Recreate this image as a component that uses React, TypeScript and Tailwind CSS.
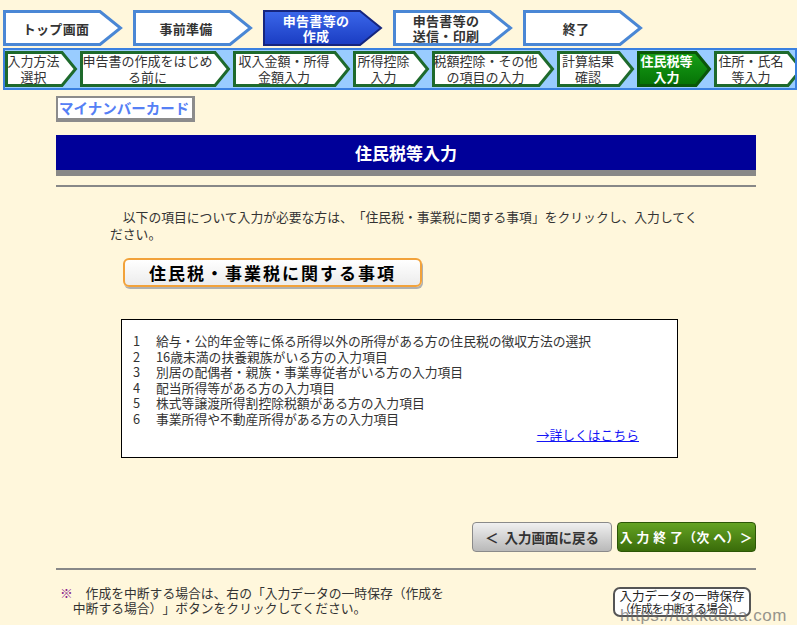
import React from "react";

type ShapeProps = {
  w: number;
  h: number;
  tip: number;
  stroke: string;
  sw: number;
  fill: string;
  grad?: { id: string; from: string; to: string };
};

function ChevronShape({ w, h, tip, stroke, sw, fill, grad }: ShapeProps) {
  const s = sw / 2;
  const pts = `${s},${s} ${w - tip},${s} ${w - s - 1},${h / 2} ${w - tip},${h - s} ${s},${h - s}`;
  return (
    <svg
      className="absolute left-0 top-0"
      width={w}
      height={h}
      viewBox={`0 0 ${w} ${h}`}
    >
      {grad && (
        <defs>
          <linearGradient id={grad.id} x1="0" y1="0" x2="0" y2="1">
            <stop offset="0" stopColor={grad.from} />
            <stop offset="1" stopColor={grad.to} />
          </linearGradient>
        </defs>
      )}
      <polygon
        points={pts}
        fill={grad ? `url(#${grad.id})` : fill}
        stroke={stroke}
        strokeWidth={sw}
        strokeLinejoin="miter"
        strokeMiterlimit={3}
      />
    </svg>
  );
}

const topSteps: { lines: string[]; active?: boolean }[] = [
  { lines: ["トップ画面"] },
  { lines: ["事前準備"] },
  { lines: ["申告書等の", "作成"], active: true },
  { lines: ["申告書等の", "送信・印刷"] },
  { lines: ["終了"] },
];

const subSteps: { lines: string[]; w: number; cls: string; active?: boolean }[] = [
  { lines: ["入力方法", "選択"], w: 73, cls: "w-[73px]" },
  { lines: ["申告書の作成をはじめ", "る前に"], w: 151, cls: "w-[151px]" },
  { lines: ["収入金額・所得", "金額入力"], w: 118, cls: "w-[118px]" },
  { lines: ["所得控除", "入力"], w: 77, cls: "w-[77px]" },
  { lines: ["税額控除・その他", "の項目の入力"], w: 123, cls: "w-[123px]" },
  { lines: ["計算結果", "確認"], w: 78, cls: "w-[78px]" },
  { lines: ["住民税等", "入力"], w: 75, cls: "w-[75px]", active: true },
  { lines: ["住所・氏名", "等入力"], w: 90, cls: "w-[90px]" },
];

const items = [
  "給与・公的年金等に係る所得以外の所得がある方の住民税の徴収方法の選択",
  "16歳未満の扶養親族がいる方の入力項目",
  "別居の配偶者・親族・事業専従者がいる方の入力項目",
  "配当所得等がある方の入力項目",
  "株式等譲渡所得割控除税額がある方の入力項目",
  "事業所得や不動産所得がある方の入力項目",
];

export default function App() {
  return (
    <div className="relative min-h-screen w-full overflow-hidden bg-[#fff7dc] font-['Noto_Sans_CJK_JP',sans-serif] text-[#333] [text-spacing-trim:space-all]">
      {/* top steps */}
      <div className="flex gap-[10px] pl-[3px] pt-[10px]">
        {topSteps.map((s, i) => (
          <div key={i} className="relative h-[36px] w-[120px] shrink-0">
            <ChevronShape
              w={120}
              h={36}
              tip={23}
              sw={s.active ? 2 : 3}
              stroke={s.active ? "#16267e" : "#4a87d5"}
              fill="#ffffff"
              grad={s.active ? { id: "topActive", from: "#3b67ea", to: "#1a3cc2" } : undefined}
            />
            <div
              className={`relative flex h-full flex-col items-center justify-center pr-[14px] text-[13px] font-bold leading-[15px] tracking-[0.3px] ${
                s.active ? "text-white" : "text-[#333]"
              }`}
            >
              {s.lines.map((l, j) => (
                <span key={j}>{l}</span>
              ))}
            </div>
          </div>
        ))}
      </div>

      {/* sub steps band */}
      <div className="ml-[3px] mt-[2px] flex h-[42px] w-[794px] items-center gap-[2px] overflow-hidden border-2 border-[#3a80e0] bg-[#99ccff]">
        {subSteps.map((s, i) => (
          <div key={i} className={`relative h-[36px] shrink-0 ${s.cls}`}>
            <ChevronShape
              w={s.w}
              h={36}
              tip={16}
              sw={3}
              stroke={s.active ? "#0a560a" : "#1e6a2c"}
              fill="#ffffff"
              grad={s.active ? { id: "subActive", from: "#17a017", to: "#067206" } : undefined}
            />
            <div
              className={`relative flex h-full flex-col items-center justify-center pr-[16px] text-[13px] leading-[16px] ${
                s.active ? "font-bold text-white" : "text-[#333]"
              }`}
            >
              {s.lines.map((l, j) => (
                <span key={j} className="whitespace-nowrap">
                  {l}
                </span>
              ))}
            </div>
          </div>
        ))}
      </div>

      {/* main content */}
      <div className="ml-[56px] w-[700px]">
        <div className="mt-[6px] flex h-[26px] w-[139px] items-center border-2 border-b-[4px] border-r-[3px] border-[#8c8c8c] bg-white pl-[1px] text-[14.5px] font-bold leading-none text-[#5580f5]">
          マイナンバーカード
        </div>

        <div className="mt-[13px] flex h-[41px] items-center justify-center border-b-[6px] border-[#888] bg-[#000099] text-[17px] font-bold text-white">
          住民税等入力
        </div>

        <div className="mt-[9px] h-[2px] bg-[#888]"></div>

        <p className="ml-[54px] mt-[21px] w-[595px] text-[12.8px] leading-[17px]">
          {"\u3000"}以下の項目について入力が必要な方は、「住民税・事業税に関する事項」をクリックし、入力してください。
        </p>

        <div className="ml-[67px] mt-[16px] flex h-[29px] w-[299px] items-center justify-center rounded-[6px] border-2 border-[#f2a23a] bg-gradient-to-b from-white to-[#ececec] text-[17px] font-bold tracking-[2px] text-black shadow-[1px_2px_0_#b0b0b0]">
          住民税・事業税に関する事項
        </div>

        <div className="ml-[65px] mt-[32px] h-[139px] w-[557px] border border-black bg-white pl-[11px] pt-[13px] text-[12.8px] leading-[15.5px]">
          {items.map((t, i) => (
            <div key={i} className="flex">
              <span className="w-[23px] shrink-0">{i + 1}</span>
              <span>{t}</span>
            </div>
          ))}
          <div className="mt-[1px] pr-[38px] text-right">
            <span className="text-[#1515f5] underline">→詳しくはこちら</span>
          </div>
        </div>

        <div className="mt-[64px] flex justify-end gap-[5px]">
          <div className="flex h-[30px] w-[140px] items-center justify-center rounded-[4px] border border-[#8a8a8a] bg-gradient-to-b from-[#f0f0f0] to-[#b9b9b9] text-[13.5px] font-bold text-[#333]">
            <span className="mr-[6px]">＜</span>
            <span>入力画面に戻る</span>
          </div>
          <div className="flex h-[30px] w-[139px] items-center justify-center rounded-[4px] border border-[#2c5606] bg-gradient-to-b from-[#64a322] to-[#3a6c0a] text-[12.8px] font-bold tracking-[0.5px] text-white">
            入 力 終 了（次 へ）＞
          </div>
        </div>

        <div className="mt-[16px] h-[2px] bg-[#888]"></div>

        <div className="flex justify-between">
          <p className="ml-[4px] mt-[15px] w-[391px] pl-[12.8px] indent-[-12.8px] text-[12.8px] leading-[15px]">
            <span className="text-[#8a1a8a]">※</span>
            {"\u3000"}作成を中断する場合は、右の「入力データの一時保存（作成を中断する場合）」ボタンをクリックしてください。
          </p>
          <div className="mr-[5px] mt-[17px] flex h-[30px] w-[138px] flex-col items-center justify-center rounded-[7px] border-2 border-[#555] bg-white leading-[13px] text-[#222] [text-spacing-trim:trim-start]">
            <span className="text-[12.5px]">入力データの一時保存</span>
            <span className="text-[11.5px] tracking-[-0.6px]">（作成を中断する場合）</span>
          </div>
        </div>
      </div>

      <div className="absolute left-[620px] top-[603px] font-['Liberation_Sans',sans-serif] text-[17px] tracking-[0.5px] text-[#6b6b6b] opacity-70">
        https://takkaaaa.com
      </div>
    </div>
  );
}
